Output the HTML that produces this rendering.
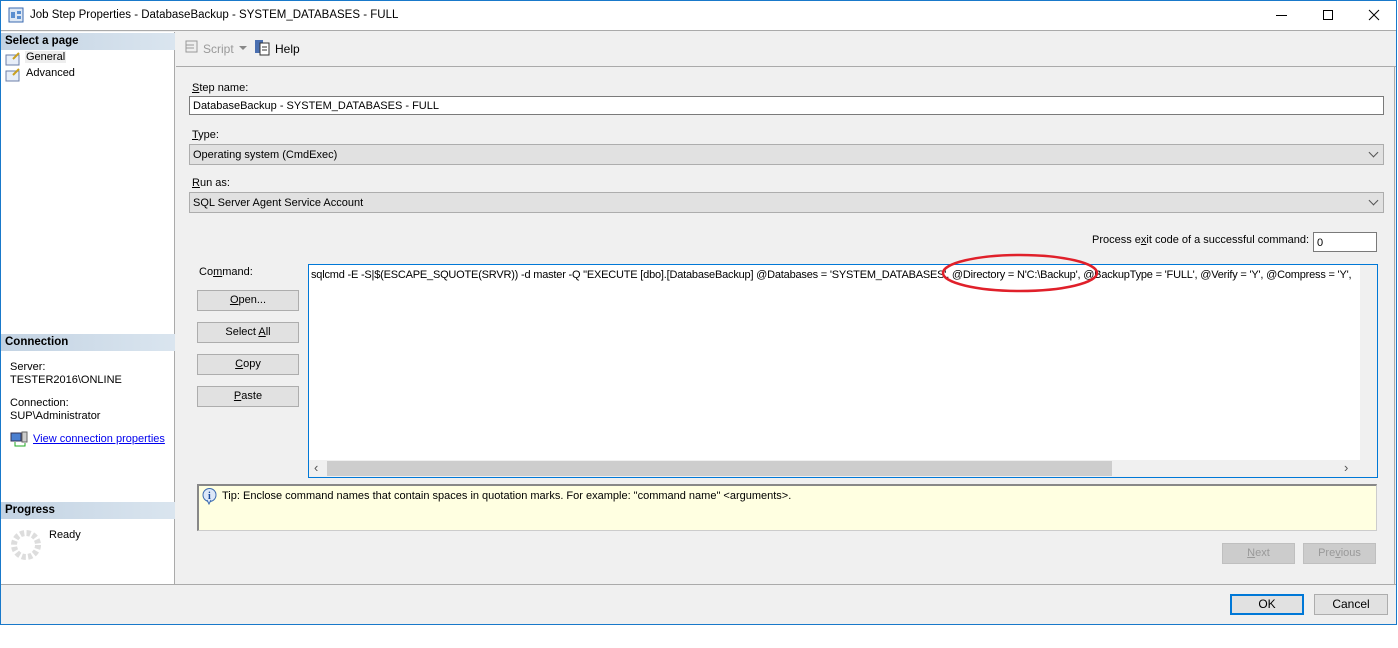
<!DOCTYPE html>
<html><head><meta charset="utf-8"><style>
*{box-sizing:border-box;margin:0;padding:0}
body{width:1398px;height:648px;background:#fff;font-family:"Liberation Sans",sans-serif;font-size:11px;color:#000;position:relative;overflow:hidden}
.a{position:absolute}
.win{left:0;top:0;width:1397px;height:625px;border:1px solid #1979ca;background:#f0f0f0}
.hdr{background:linear-gradient(90deg,#c3d3e3,#dae5ef);font-weight:bold;font-size:11.5px;height:17px;line-height:17px;padding-left:4px;width:174px;left:1px}
.btn{background:#e1e1e1;border:1px solid #adadad;text-align:center;line-height:19px}
.combo{background:#e1e1e1;border:1px solid #adadad;height:21px;line-height:20px;padding-left:3px}
.chev{position:absolute;right:6px;top:4px;width:7px;height:7px;border-right:1px solid #555;border-bottom:1px solid #555;transform:rotate(45deg)}
u{text-decoration:underline}
</style></head><body>
<div class="a win"></div>
<div class="a" style="left:1px;top:1px;width:1395px;height:30px;background:#fff;border-bottom:1px solid #aaa"></div>
<svg class="a" style="left:8px;top:7px" width="16" height="16"><rect x="1" y="1" width="14" height="14" fill="#dde8f5" stroke="#3a6ab0"/><rect x="3" y="5" width="4" height="6" fill="#5b8fd0"/><rect x="9" y="4" width="4" height="3" fill="#5b8fd0"/><rect x="9" y="9" width="4" height="3" fill="#5b8fd0"/></svg>
<div class="a" style="left:30px;top:9px;font-size:11.5px">Job Step Properties - DatabaseBackup - SYSTEM_DATABASES - FULL</div>
<div class="a" style="left:1276px;top:15px;width:11px;border-top:1px solid #000"></div>
<div class="a" style="left:1323px;top:10px;width:10px;height:10px;border:1px solid #000"></div>
<svg class="a" style="left:1368px;top:9px" width="12" height="12"><path d="M1 1L11 11M11 1L1 11" stroke="#000" stroke-width="1"/></svg>
<!-- left panel -->
<div class="a" style="left:1px;top:32px;width:174px;height:552px;background:#fff;border-right:1px solid #aaa"></div>
<div class="a hdr" style="top:33px">Select a page</div>
<svg class="a" style="left:5px;top:51px" width="16" height="32"><g fill="#e8eef8" stroke="#6b7fa8"><rect x="1" y="4" width="13" height="10"/><rect x="1" y="20" width="13" height="10"/></g><g stroke="#c9a020" stroke-width="2"><line x1="8" y1="8" x2="14" y2="2"/><line x1="8" y1="24" x2="14" y2="18"/></g></svg>
<div class="a" style="left:25px;top:51px;background:#eee;padding:0 1px">General</div>
<div class="a" style="left:26px;top:67px">Advanced</div>
<div class="a hdr" style="top:334px">Connection</div>
<div class="a" style="left:10px;top:361px;line-height:13px">Server:<br>TESTER2016\ONLINE</div>
<div class="a" style="left:10px;top:397px;line-height:13px">Connection:<br>SUP\Administrator</div>
<svg class="a" style="left:10px;top:431px" width="18" height="16"><rect x="1" y="2" width="10" height="8" fill="#4a7fd0" stroke="#335"/><rect x="12" y="1" width="5" height="10" fill="#ccc" stroke="#666"/><path d="M5 11v4h10v-3" stroke="#2a2" fill="none"/></svg>
<div class="a" style="left:33px;top:433px;color:#00e;text-decoration:underline">View connection properties</div>
<div class="a hdr" style="top:502px">Progress</div>
<svg class="a" style="left:10px;top:529px" width="32" height="32"><circle cx="16" cy="16" r="12" fill="none" stroke="#ddd" stroke-width="6" stroke-dasharray="4 2.3"/></svg>
<div class="a" style="left:49px;top:529px">Ready</div>
<!-- toolbar -->
<svg class="a" style="left:183px;top:39px" width="17" height="17"><path d="M3 2h11v11H3zM3 6h8M3 9h8" stroke="#999" fill="#eee"/></svg>
<div class="a" style="left:203px;top:42px;color:#999;font-size:12px">Script</div>
<div class="a" style="left:239px;top:46px;border:4px solid transparent;border-top-color:#888"></div>
<svg class="a" style="left:254px;top:38px" width="17" height="18"><rect x="1" y="2" width="8" height="13" fill="#4a6fb0"/><rect x="6" y="5" width="9" height="12" fill="#fff" stroke="#333"/><path d="M8 9h5M8 12h5" stroke="#333"/></svg>
<div class="a" style="left:275px;top:42px;font-size:12px">Help</div>
<div class="a" style="left:176px;top:66px;width:1220px;border-top:1px solid #aaa"></div>
<div class="a" style="left:1394px;top:66px;height:518px;border-left:1px solid #aaa"></div>
<!-- form -->
<div class="a" style="left:192px;top:82px"><u>S</u>tep name:</div>
<div class="a" style="left:189px;top:96px;width:1195px;height:19px;background:#fff;border:1px solid #7a7a7a;padding-left:3px;line-height:18px">DatabaseBackup - SYSTEM_DATABASES - FULL</div>
<div class="a" style="left:192px;top:129px"><u>T</u>ype:</div>
<div class="a combo" style="left:189px;top:144px;width:1195px">Operating system (CmdExec)<span class="chev"></span></div>
<div class="a" style="left:192px;top:177px"><u>R</u>un as:</div>
<div class="a combo" style="left:189px;top:192px;width:1195px">SQL Server Agent Service Account<span class="chev"></span></div>
<div class="a" style="left:1092px;top:234px">Process e<u>x</u>it code of a successful command:</div>
<div class="a" style="left:1313px;top:232px;width:64px;height:20px;background:#fff;border:1px solid #7a7a7a;padding-left:3px;line-height:20px">0</div>
<div class="a" style="left:199px;top:266px">Co<u>m</u>mand:</div>
<div class="a btn" style="left:197px;top:290px;width:102px;height:21px"><u>O</u>pen...</div>
<div class="a btn" style="left:197px;top:322px;width:102px;height:21px">Select <u>A</u>ll</div>
<div class="a btn" style="left:197px;top:354px;width:102px;height:21px"><u>C</u>opy</div>
<div class="a btn" style="left:197px;top:386px;width:102px;height:21px"><u>P</u>aste</div>
<div class="a" style="left:308px;top:264px;width:1070px;height:214px;background:#fff;border:1px solid #0078d7;overflow:hidden">
<div class="a" style="left:2px;top:4px;white-space:nowrap;letter-spacing:-0.2px">sqlcmd -E -S|$(ESCAPE_SQUOTE(SRVR)) -d master -Q "EXECUTE [dbo].[DatabaseBackup] @Databases = 'SYSTEM_DATABASES', @Directory = N'C:\Backup', @BackupType = 'FULL', @Verify = 'Y', @Compress = 'Y',</div>
<div class="a" style="left:1051px;top:0;width:17px;height:195px;background:#f0f0f0"></div>
<div class="a" style="left:0;top:195px;width:1068px;height:17px;background:#f0f0f0"></div>
<div class="a" style="left:18px;top:196px;width:785px;height:15px;background:#cdcdcd"></div>
<div class="a" style="left:5px;top:195px;color:#555;font-size:13px">&lsaquo;</div>
<div class="a" style="left:1035px;top:195px;color:#555;font-size:13px">&rsaquo;</div>
</div>
<svg class="a" style="left:940px;top:252px" width="160" height="42"><ellipse cx="80" cy="21" rx="77" ry="18" fill="none" stroke="#e0202a" stroke-width="2.5"/></svg>
<div class="a" style="left:197px;top:484px;width:1180px;height:47px;background:#ffffe1;border:1px solid #ccc;border-top:2px solid #888;border-left:2px solid #888"></div>
<svg class="a" style="left:202px;top:488px" width="15" height="17"><circle cx="7.5" cy="7" r="6.5" fill="#dde8f8" stroke="#3a6ab0"/><path d="M5 12l2 4 2-4" fill="#dde8f8" stroke="#3a6ab0"/><text x="6" y="11" font-size="10" font-weight="bold" fill="#1a4a9a" font-family="Liberation Serif">i</text></svg>
<div class="a" style="left:222px;top:490px">Tip: Enclose command names that contain spaces in quotation marks. For example: "command name" &lt;arguments&gt;.</div>
<div class="a btn" style="left:1222px;top:543px;width:73px;height:21px;background:#ccc;border-color:#bfbfbf;color:#999"><u>N</u>ext</div>
<div class="a btn" style="left:1303px;top:543px;width:73px;height:21px;background:#ccc;border-color:#bfbfbf;color:#999">Pre<u>v</u>ious</div>
<div class="a" style="left:1px;top:584px;width:1395px;border-top:1px solid #aaa"></div>
<div class="a btn" style="left:1230px;top:594px;width:74px;height:21px;border:2px solid #0078d7;line-height:17px;font-size:12px">OK</div>
<div class="a btn" style="left:1314px;top:594px;width:74px;height:21px;font-size:12px">Cancel</div>
</body></html>
